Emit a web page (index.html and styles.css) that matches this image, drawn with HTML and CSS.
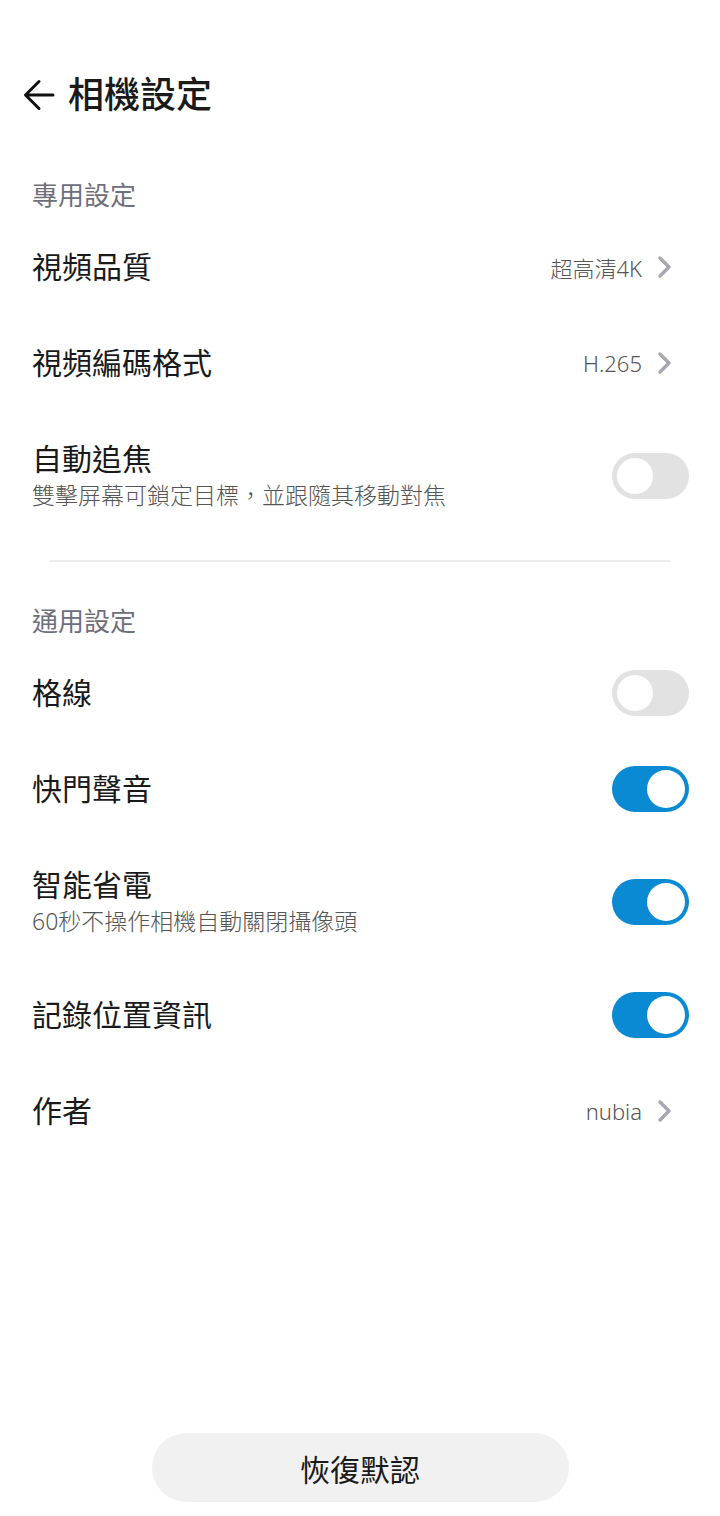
FILE: index.html
```html
<!DOCTYPE html>
<html lang="zh-Hant">
<head>
    <meta charset="UTF-8">
    <meta name="viewport" content="width=device-width, initial-scale=1.0">
    <title>相機設定</title>
    <link rel="stylesheet" href="styles.css">
</head>
<body>
    <div class="page">
        <div class="topbar">
            <svg class="back" width="34" height="34" viewBox="0 0 34 34">
                <path d="M31 17 H4 M17 3.5 L3.5 17 L17 30.5" fill="none" stroke="#111" stroke-width="3" stroke-linecap="round" stroke-linejoin="round"/>
            </svg>
            <div class="title">相機設定</div>
        </div>

        <!-- 專用設定 -->
        <div class="section-title">專用設定</div>

        <div class="row">
            <div class="label">視頻品質</div>
            <div class="value">超高清4K</div>
            <svg class="chevron" width="20" height="24" viewBox="0 0 20 24">
                <path d="M5 3 L14 12 L5 21" fill="none" stroke="#a7a7b2" stroke-width="3.4" stroke-linecap="round" stroke-linejoin="round"/>
            </svg>
        </div>

        <div class="row">
            <div class="label">視頻編碼格式</div>
            <div class="value">H.265</div>
            <svg class="chevron" width="20" height="24" viewBox="0 0 20 24">
                <path d="M5 3 L14 12 L5 21" fill="none" stroke="#a7a7b2" stroke-width="3.4" stroke-linecap="round" stroke-linejoin="round"/>
            </svg>
        </div>

        <div class="row tall">
            <div class="text">
                <div class="label">自動追焦</div>
                <div class="sub">雙擊屏幕可鎖定目標，並跟隨其移動對焦</div>
            </div>
            <div class="switch"></div>
        </div>

        <div class="divider"></div>

        <!-- 通用設定 -->
        <div class="section-title">通用設定</div>

        <div class="row">
            <div class="label">格線</div>
            <div class="switch"></div>
        </div>

        <div class="row">
            <div class="label">快門聲音</div>
            <div class="switch on"></div>
        </div>

        <div class="row tall">
            <div class="text">
                <div class="label">智能省電</div>
                <div class="sub">60秒不操作相機自動關閉攝像頭</div>
            </div>
            <div class="switch on"></div>
        </div>

        <div class="row">
            <div class="label">記錄位置資訊</div>
            <div class="switch on"></div>
        </div>

        <div class="row">
            <div class="label">作者</div>
            <div class="value">nubia</div>
            <svg class="chevron" width="20" height="24" viewBox="0 0 20 24">
                <path d="M5 3 L14 12 L5 21" fill="none" stroke="#a7a7b2" stroke-width="3.4" stroke-linecap="round" stroke-linejoin="round"/>
            </svg>
        </div>

        <div class="footer">
            <div class="reset">恢復默認</div>
        </div>
    </div>
</body>
</html>
```

FILE: styles.css
```css
body {
    margin: 0;
    padding: 0;
    background: #fff;
    color: #1a1a1a;
    font-family: "Noto Sans", "Noto Sans CJK TC", sans-serif;
}

.page {
    display: flex;
    flex-direction: column;
    min-height: 100vh;
}

.topbar {
    display: flex;
    align-items: center;
    height: 60px;
    margin-top: 65px;
    padding-left: 22px;
}

.back {
    display: block;
    margin-right: 12px;
}

.title {
    font-size: 36px;
    font-weight: 500;
    line-height: 44px;
}

.section-title {
    display: flex;
    align-items: center;
    height: 50px;
    margin-top: 44px;
    padding-left: 32px;
    font-size: 26px;
    color: #6f6e7b;
}

.divider + .section-title {
    margin-top: 33px;
}

.row {
    display: flex;
    align-items: center;
    min-height: 96px;
    padding: 0 31px 0 32px;
}

.row.tall {
    min-height: 130px;
}

.text {
    flex: 1;
}

.label {
    flex: 1;
    font-size: 30px;
    line-height: 38px;
}

.sub {
    font-size: 23px;
    font-weight: 300;
    line-height: 34px;
    color: #555;
}

.value {
    font-size: 22px;
    font-weight: 300;
    color: #555;
    margin-right: 13px;
}

.chevron {
    display: block;
    margin-right: 14px;
}

/* toggle */
.switch {
    position: relative;
    width: 77px;
    height: 46px;
    border-radius: 23px;
    background-color: #e2e2e2;
    flex: none;
}

.switch::after {
    content: '';
    position: absolute;
    top: 5px;
    left: 5px;
    width: 36px;
    height: 36px;
    border-radius: 50%;
    background-color: #fff;
}

.switch.on {
    background-color: #0a8ad2;
}

.switch.on::after {
    left: auto;
    right: 4px;
    top: 4px;
    width: 38px;
    height: 38px;
}

.divider {
    height: 2px;
    margin: 19px 50px 0;
    background-color: #ececec;
}

.footer {
    margin-top: auto;
    display: flex;
    justify-content: center;
    padding-bottom: 14px;
}

.reset {
    width: 417px;
    height: 69px;
    border-radius: 35px;
    background-color: #f1f1f1;
    display: flex;
    align-items: center;
    justify-content: center;
    font-size: 30px;
    color: #1a1a1a;
}
```
